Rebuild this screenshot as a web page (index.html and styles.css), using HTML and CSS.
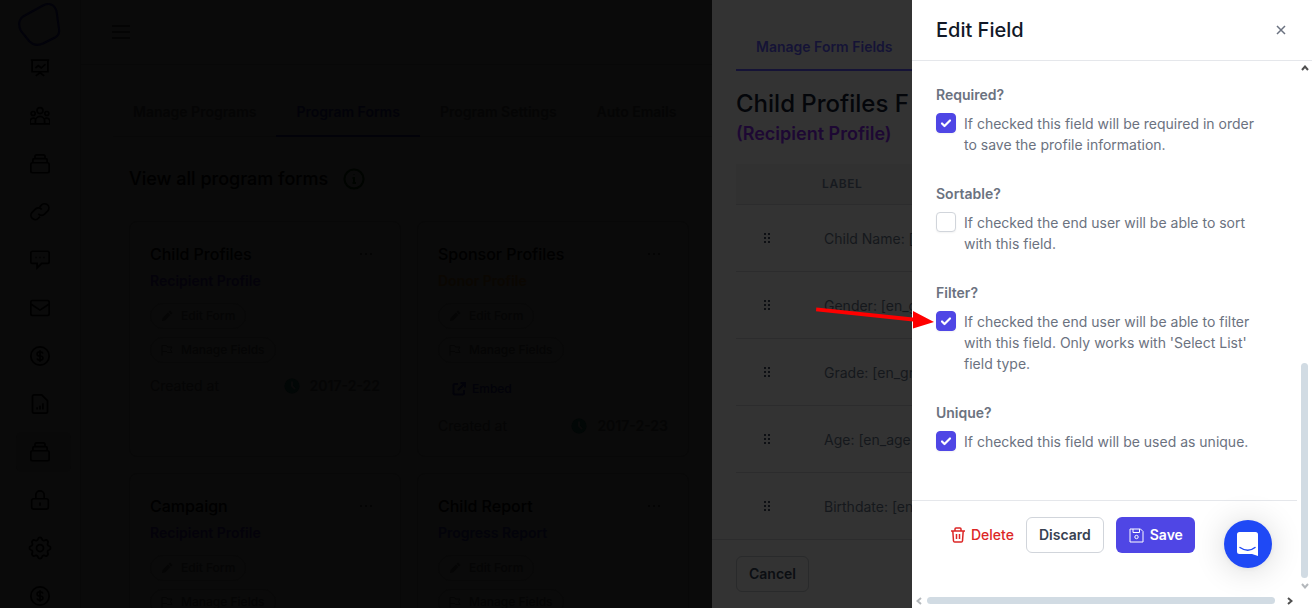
FILE: index.html
```html
<!DOCTYPE html>
<html lang="en">
<head>
<meta charset="utf-8">
<meta name="viewport" content="width=device-width, initial-scale=1">
<title>Edit Field</title>
<link rel="stylesheet" href="styles.css">
</head>
<body>
<svg class="sprite" aria-hidden="true">
  <symbol id="i-board" viewBox="0 0 24 24"><path d="M1 2.500h22M2.500 2.500v14h19v-14M6.500 12l3.500-3 3.500 3 5-4.500M7 21.500l5-4 5 4"/></symbol>
  <symbol id="i-users" viewBox="0 0 24 24"><circle cx="12" cy="5.500" r="3.600"/><circle cx="3.800" cy="9" r="2.400"/><circle cx="20.200" cy="9" r="2.400"/><path d="M6.500 21.500v-3.500a5.500 5.500 0 0 1 11 0v3.500zM6.500 21.500H0v-2.500a4 4 0 0 1 6.500-3.500M17.500 21.500H24v-2.500a4 4 0 0 0-6.500-3.500"/></symbol>
  <symbol id="i-stack" viewBox="0 0 24 24"><rect x="1" y="10.500" width="22" height="12" rx="2"/><path d="M3.500 10.500V7a1.500 1.500 0 0 1 1.500-1.500h14A1.500 1.500 0 0 1 20.500 7v3.500M6 5.500V3a2 2 0 0 1 2-2h8a2 2 0 0 1 2 2v2.500"/></symbol>
  <symbol id="i-link" viewBox="0 0 24 24"><path d="M10 14.500a5 5 0 0 0 7.500.5l4-4a5 5 0 0 0-8-6.500l-2 2M14 9.500a5 5 0 0 0-7.500-.5l-4 4a5 5 0 0 0 7.500 7l2-2" transform="translate(0 -0.500)"/></symbol>
  <symbol id="i-chat" viewBox="0 0 24 24"><path d="M3 1.500h18a2 2 0 0 1 2 2V14a2 2 0 0 1-2 2h-7l-5.500 5.500V16H3a2 2 0 0 1-2-2V3.500a2 2 0 0 1 2-2zM6.500 9h1.500M11.200 9h1.500M16 9h1.500"/></symbol>
  <symbol id="i-mail" viewBox="0 0 24 24"><rect x="1" y="3" width="22" height="18" rx="2"/><path d="M1.500 7.500L12 14.500l10.500-7"/></symbol>
  <symbol id="i-dollar" viewBox="0 0 24 24"><circle cx="12" cy="12" r="11"/><path d="M15.500 9c-.5-1.500-1.800-2-3.500-2-2 0-3.500.8-3.500 2.500S10 12 12 12s3.500.8 3.500 2.500S14 17 12 17s-3.200-.6-3.600-2M12 5v14"/></symbol>
  <symbol id="i-report" viewBox="0 0 24 24"><path d="M5 1h9l7 7v13a2 2 0 0 1-2 2H5a2 2 0 0 1-2-2V3a2 2 0 0 1 2-2zM8.500 18.500V16M12 18.500V14M15.500 18.500V11"/></symbol>
  <symbol id="i-lock" viewBox="0 0 24 24"><rect x="2" y="10.500" width="20" height="12.500" rx="2.500"/><path d="M7 10.500V6a5 5 0 0 1 10 0v4.500M12 15v4"/></symbol>
  <symbol id="i-gear" viewBox="0 0 24 24"><path d="M10.300 4.300c.4-1.750 2.900-1.750 3.400 0a1.700 1.700 0 0 0 2.600 1.100c1.500-.95 3.300.8 2.400 2.400a1.700 1.700 0 0 0 1 2.500c1.800.4 1.800 2.900 0 3.400a1.700 1.700 0 0 0-1 2.600c.9 1.500-.9 3.300-2.400 2.400a1.700 1.700 0 0 0-2.600 1c-.5 1.800-3 1.800-3.400 0a1.700 1.700 0 0 0-2.600-1c-1.500.9-3.300-.9-2.400-2.400a1.700 1.700 0 0 0-1-2.600c-1.800-.5-1.800-3 0-3.400a1.700 1.700 0 0 0 1-2.500c-.9-1.600.9-3.350 2.400-2.400 1 .6 2.300.1 2.600-1.100z"/><circle cx="12" cy="12" r="3"/></symbol>
  <symbol id="i-pencil" viewBox="0 0 12 12"><path d="M1 11l.8-3L7 2.800 9.200 5 4 10.200zM7.800 2L9 .8 11.200 3 10 4.200z"/></symbol>
  <symbol id="i-flag" viewBox="0 0 12 12"><path d="M1 11.500v-10h4.500L6.500 3H11L9.500 5.500 11 8.500H6.500L5.500 7.500H1"/></symbol>
  <symbol id="i-clock" viewBox="0 0 16 16"><circle cx="8" cy="8" r="7.500"/><path class="hand" d="M8 3.500V8l3 3"/></symbol>
  <symbol id="i-grip" viewBox="0 0 6 10"><path d="M0 0h2v2H0zM4 0h2v2H4zM0 4h2v2H0zM4 4h2v2H4zM0 8h2v2H0zM4 8h2v2H4z"/></symbol>
</svg>

<div class="app">
  <nav class="sidebar" aria-label="Main">
    <svg class="logo" viewBox="0 0 44 44"><path d="M5 14.500L25 3.500Q35-1 38.500 9L41 27Q42 33 37 35.500L25 41.500Q17 45 11.500 39.500L3 29Q-1.500 20 5 14.500z"/></svg>
    <a class="side-link" href="#dashboard" aria-label="Dashboard"><svg class="icon"><use href="#i-board"/></svg></a>
    <a class="side-link" href="#people" aria-label="People"><svg class="icon"><use href="#i-users"/></svg></a>
    <a class="side-link" href="#records" aria-label="Records"><svg class="icon"><use href="#i-stack"/></svg></a>
    <a class="side-link" href="#links" aria-label="Links"><svg class="icon"><use href="#i-link"/></svg></a>
    <a class="side-link" href="#messages" aria-label="Messages"><svg class="icon"><use href="#i-chat"/></svg></a>
    <a class="side-link" href="#mail" aria-label="Mail"><svg class="icon"><use href="#i-mail"/></svg></a>
    <a class="side-link" href="#payments" aria-label="Payments"><svg class="icon"><use href="#i-dollar"/></svg></a>
    <a class="side-link" href="#reports" aria-label="Reports"><svg class="icon"><use href="#i-report"/></svg></a>
    <a class="side-link is-active" href="#programs" aria-label="Programs"><svg class="icon"><use href="#i-stack"/></svg></a>
    <a class="side-link" href="#security" aria-label="Security"><svg class="icon"><use href="#i-lock"/></svg></a>
    <a class="side-link" href="#settings" aria-label="Settings"><svg class="icon icon-gear"><use href="#i-gear"/></svg></a>
    <a class="side-link" href="#billing" aria-label="Billing"><svg class="icon"><use href="#i-dollar"/></svg></a>
  </nav>

  <div class="page">
    <header class="topbar">
      <button class="menu-button" type="button" aria-label="Menu"><svg viewBox="0 0 18 14"><path d="M0 1h18M0 7h18M0 13h18"/></svg></button>
    </header>
    <main class="content">
      <nav class="tabs">
        <a class="tab" href="#manage-programs">Manage Programs</a>
        <a class="tab is-active" href="#program-forms">Program Forms</a>
        <a class="tab" href="#program-settings">Program Settings</a>
        <a class="tab" href="#auto-emails">Auto Emails</a>
      </nav>
      <div class="heading">
        <h1>View all program forms</h1>
        <svg class="info" viewBox="0 0 22 22"><circle cx="11" cy="11" r="9.500"/><path d="M11 6.500v.5M9.500 10H11v5M9.500 15h3.500"/></svg>
      </div>
      <div class="cards">
        <article class="card">
          <div class="card-head"><h2>Child Profiles</h2><button class="more" type="button" aria-label="More"><i></i><i></i><i></i></button></div>
          <p class="kind">Recipient Profile</p>
          <div class="card-actions">
            <button class="pill" type="button"><svg class="fill"><use href="#i-pencil"/></svg>Edit Form</button>
            <button class="pill" type="button"><svg><use href="#i-flag"/></svg>Manage Fields</button>
          </div>
          <div class="created"><span>Created at</span><svg><use href="#i-clock"/></svg><time>2017-2-22</time></div>
        </article>
        <article class="card">
          <div class="card-head"><h2>Sponsor Profiles</h2><button class="more" type="button" aria-label="More"><i></i><i></i><i></i></button></div>
          <p class="kind kind-donor">Donor Profile</p>
          <div class="card-actions">
            <button class="pill" type="button"><svg class="fill"><use href="#i-pencil"/></svg>Edit Form</button>
            <button class="pill" type="button"><svg><use href="#i-flag"/></svg>Manage Fields</button>
          </div>
          <a class="embed" href="#embed"><svg viewBox="0 0 14 14"><path d="M6 2H3a1.500 1.500 0 0 0-1.500 1.500V11A1.500 1.500 0 0 0 3 12.500h7.500A1.500 1.500 0 0 0 12 11V8M8.500 1H13v4.500M13 1L6 8"/></svg>Embed</a>
          <div class="created"><span>Created at</span><svg><use href="#i-clock"/></svg><time>2017-2-23</time></div>
        </article>
        <article class="card">
          <div class="card-head"><h2>Campaign</h2><button class="more" type="button" aria-label="More"><i></i><i></i><i></i></button></div>
          <p class="kind">Recipient Profile</p>
          <div class="card-actions">
            <button class="pill" type="button"><svg class="fill"><use href="#i-pencil"/></svg>Edit Form</button>
            <button class="pill" type="button"><svg><use href="#i-flag"/></svg>Manage Fields</button>
          </div>
        </article>
        <article class="card">
          <div class="card-head"><h2>Child Report</h2><button class="more" type="button" aria-label="More"><i></i><i></i><i></i></button></div>
          <p class="kind kind-report">Progress Report</p>
          <div class="card-actions">
            <button class="pill" type="button"><svg class="fill"><use href="#i-pencil"/></svg>Edit Form</button>
            <button class="pill" type="button"><svg><use href="#i-flag"/></svg>Manage Fields</button>
          </div>
        </article>
      </div>
    </main>
  </div>
</div>

<section class="fields-drawer" aria-label="Manage Form Fields">
  <div class="fields-body">
    <nav class="fields-tabs"><a href="#fields">Manage Form Fields</a></nav>
    <h2 class="fields-title">Child Profiles F</h2>
    <p class="fields-kind">(Recipient Profile)</p>
    <table class="fields-table">
      <thead><tr><th class="grip-cell" aria-label="Order"></th><th>LABEL</th></tr></thead>
      <tbody>
        <tr><td class="grip-cell"><svg class="grip"><use href="#i-grip"/></svg></td><td>Child Name: [</td></tr>
        <tr><td class="grip-cell"><svg class="grip"><use href="#i-grip"/></svg></td><td>Gender: [en_g</td></tr>
        <tr><td class="grip-cell"><svg class="grip"><use href="#i-grip"/></svg></td><td>Grade: [en_gr</td></tr>
        <tr><td class="grip-cell"><svg class="grip"><use href="#i-grip"/></svg></td><td>Age: [en_age</td></tr>
        <tr><td class="grip-cell"><svg class="grip"><use href="#i-grip"/></svg></td><td>Birthdate: [en</td></tr>
      </tbody>
    </table>
  </div>
  <footer class="fields-footer"><button class="cancel" type="button">Cancel</button></footer>
</section>

<section class="edit-drawer" role="dialog" aria-labelledby="edit-title">
  <header class="edit-header">
    <h2 id="edit-title">Edit Field</h2>
    <button class="close" type="button" aria-label="Close"><svg viewBox="0 0 10 10"><path d="M1 1l8 8M9 1L1 9"/></svg></button>
  </header>
  <div class="edit-main">
    <form class="edit-form">
      <div class="options">
        <div class="option">
          <h3>Required?</h3>
          <label><input type="checkbox" checked><span>If checked this field will be required in order to save the profile information.</span></label>
        </div>
        <div class="option">
          <h3>Sortable?</h3>
          <label><input type="checkbox"><span>If checked the end user will be able to sort with this field.</span></label>
        </div>
        <div class="option">
          <h3>Filter?</h3>
          <label><input type="checkbox" checked><span>If checked the end user will be able to filter with this field. Only works with 'Select List' field type.</span></label>
        </div>
        <div class="option">
          <h3>Unique?</h3>
          <label><input type="checkbox" checked><span>If checked this field will be used as unique.</span></label>
        </div>
      </div>
      <footer class="actions">
        <button class="btn btn-delete" type="button"><svg viewBox="0 0 14 16"><path d="M0 4h14M4 4V2a1 1 0 0 1 1-1h4a1 1 0 0 1 1 1v2M1.800 4l.7 10a1.200 1.200 0 0 0 1.200 1h6.600a1.200 1.200 0 0 0 1.200-1l.7-10M5.500 7v5M8.500 7v5"/></svg>Delete</button>
        <button class="btn btn-discard" type="button">Discard</button>
        <button class="btn btn-save" type="button"><svg viewBox="0 0 15 15"><path d="M1 1h10.500L14 3.500V14H1zM4 1v3.500h6.500V1"/><circle cx="7.500" cy="9" r="1.700"/></svg>Save</button>
      </footer>
    </form>
    <div class="scroll scroll-y" aria-hidden="true">
      <svg viewBox="0 0 8 6"><path d="M1 5l3-3.500L7 5"/></svg><span class="thumb"></span><svg class="dim" viewBox="0 0 8 6"><path d="M1 1l3 3.500L7 1"/></svg>
    </div>
  </div>
  <div class="scroll scroll-x" aria-hidden="true">
    <svg class="dim" viewBox="0 0 6 8"><path d="M5 1L1.500 4 5 7"/></svg><span class="thumb"></span><svg viewBox="0 0 6 8"><path d="M1 1l3.500 3L1 7"/></svg>
  </div>
</section>

<svg class="pointer" viewBox="0 0 118 22" aria-hidden="true"><path d="M0.300 0.500L97 10.500V4L118 15 97 21.500V14.600L0 4.300z"/></svg>

<button class="messenger" type="button" aria-label="Open chat"><svg viewBox="0 0 24 26"><path d="M3.500 1h16A2.500 2.500 0 0 1 22 3.500V25l-6-2H3.500A2.500 2.500 0 0 1 1 20.500v-17A2.500 2.500 0 0 1 3.500 1z" fill="#fff"/><path d="M4 16.500q8 5.500 15 0" fill="none" stroke="#1f49f5" stroke-width="1.500" stroke-linecap="round"/></svg></button>
</body>
</html>
```
FILE: styles.css
```css
* { box-sizing: border-box; }
body {
  margin: 0;
  height: 100vh;
  overflow: hidden;
  background: #0a0a0a;
  color: #000;
  font-family: Inter, "Liberation Sans", sans-serif;
  font-size: 14px;
  line-height: 20px;
}
h1, h2, h3, p { margin: 0; font-weight: 500; }
a { color: inherit; text-decoration: none; }
button { font: inherit; color: inherit; background: none; border: 0; padding: 0; }
svg { display: block; flex: none; fill: none; stroke: currentColor; }
.sprite { display: none; }

/* Page behind the drawers */
.app { display: flex; height: 100vh; overflow: hidden; }
.sidebar {
  flex: none;
  width: 81px;
  padding: 2px 9px 0 16px;
  border-right: 1px solid #080808;
  display: flex;
  flex-direction: column;
}
.logo { flex: none; width: 44px; height: 44px; margin: 0 2px 2px; color: #02020a; stroke-width: 2; }
.side-link {
  flex: none;
  height: 40px;
  margin-bottom: 8px;
  padding-left: 14px;
  display: flex;
  align-items: center;
  border-radius: 6px;
}
.side-link.is-active { background: #090909; }
.icon { width: 20px; height: 20px; stroke-width: 2; overflow: visible; }
.icon-gear { width: 28px; height: 28px; margin-left: -4px; stroke-width: 1.500; }
.page { flex: 1; min-width: 0; }
.topbar {
  height: 65px;
  padding: 0 31px;
  border-bottom: 1px solid #080808;
  display: flex;
  align-items: center;
}
.menu-button svg { width: 18px; height: 14px; color: #040404; stroke-width: 2; }
.content { padding: 24px 32px; }
.tabs { display: flex; height: 48px; border-bottom: 1px solid #080808; color: #050505; }
.tab { padding: 13px 20px; font-weight: 600; height: 48px; white-space: nowrap; }
.tab.is-active { color: #020209; border-bottom: 2px solid #020209; }
.heading { display: flex; align-items: center; gap: 15px; padding: 28px 16px; }
.heading h1 { font-size: 18px; line-height: 28px; }
.info { width: 22px; height: 22px; color: #000400; stroke-width: 2; }
.cards {
  display: grid;
  grid-template-columns: repeat(auto-fill, 272px);
  grid-auto-rows: 236px;
  gap: 16px;
  padding: 0 16px;
  max-width: 608px;
}
.card { padding: 20px; border: 1px solid #080808; border-radius: 8px; display: flex; flex-direction: column; }
.card-head { display: flex; justify-content: space-between; align-items: center; }
.card h2 { font-size: 16px; line-height: 24px; }
.more { display: flex; gap: 3px; padding-right: 8px; }
.more i { width: 2px; height: 2px; background: #040404; }
.kind { color: #04020a; font-weight: 600; padding: 5px 0 12px; }
.kind-donor { color: #0b0702; }
.kind-report { color: #03030a; }
.card-actions { display: flex; flex-direction: column; align-items: flex-start; gap: 8px; }
.pill {
  height: 26px;
  padding: 0 10px;
  border: 1px solid #080808;
  border-radius: 13px;
  color: #050505;
  font-size: 12px;
  font-weight: 500;
  display: flex;
  align-items: center;
  gap: 8px;
}
.pill svg { width: 12px; height: 12px; }
.pill .fill { fill: currentColor; stroke: none; }
.embed { display: flex; align-items: center; gap: 6px; padding: 16px 14px 0; color: #020209; font-size: 12px; font-weight: 500; }
.embed svg { width: 14px; height: 14px; stroke-width: 2; }
.created { display: flex; align-items: center; gap: 10px; padding-top: 13px; color: #050505; }
.embed + .created { padding-top: 17px; }
.created span { flex: 1; }
.created svg { width: 16px; height: 16px; fill: #020706; stroke: none; }
.hand { stroke: #0a0a0a; stroke-width: 2; fill: none; }
.created time { font-weight: 600; }

/* Form fields drawer */
.fields-drawer {
  position: fixed;
  inset: 0 400px 0 auto;
  width: 200px;
  overflow: hidden;
  background: #333;
  white-space: nowrap;
  display: flex;
  flex-direction: column;
}
.fields-body { flex: 1; min-height: 0; overflow: hidden; padding: 24px 0 0 24px; }
.fields-tabs { display: flex; }
.fields-tabs a {
  flex: 1;
  padding: 13px 0 12px 20px;
  border-bottom: 2px solid #151336;
  color: #151336;
  font-weight: 600;
}
.fields-title { padding-top: 17px; color: #04060a; font-size: 24px; line-height: 32px; }
.fields-kind { color: #1d0833; font-size: 18px; line-height: 28px; font-weight: 600; }
.fields-table { width: 100%; margin-top: 16px; border-collapse: collapse; table-layout: fixed; }
.fields-table th {
  height: 40px;
  padding: 0 0 0 14px;
  background: #313131;
  color: #171a1f;
  font-size: 12px;
  font-weight: 600;
  letter-spacing: .05em;
  text-align: left;
}
.fields-table td { height: 67px; padding: 2px 0 0 16px; color: #15181c; overflow: hidden; }
.fields-table tr { border-bottom: 1px solid #2c2c2d; }
.fields-table .grip-cell { width: 72px; padding: 0 28px; }
.grip { width: 6px; height: 10px; fill: #0d0f13; stroke: none; }
.fields-footer { flex: none; padding: 16px 24px; border-top: 1px solid #2c2c2d; background: #333; }
.cancel { height: 36px; padding: 0 12px; border: 1px solid #292a2b; border-radius: 6px; color: #0b0e12; font-weight: 600; }

/* Edit field drawer */
.edit-drawer {
  position: fixed;
  inset: 0 0 0 auto;
  width: 400px;
  background: #fff;
  display: flex;
  flex-direction: column;
}
.edit-header {
  flex: none;
  height: 61px;
  padding: 0 24px;
  border-bottom: 1px solid #e5e7eb;
  color: #111827;
  display: flex;
  align-items: center;
  justify-content: space-between;
}
.edit-header h2 { font-size: 20px; line-height: 28px; }
.close { padding: 2px; color: #6b7280; }
.close svg { width: 10px; height: 10px; stroke-width: 1.500; }
.edit-main { flex: 1; min-height: 0; display: flex; }
.edit-form { flex: 1; min-width: 0; display: flex; flex-direction: column; }
.options { display: flex; flex-direction: column; gap: 28px; padding: 23px 24px 48px; color: #6b7280; line-height: 21px; }
.option h3 { font-size: 14px; line-height: 21px; font-weight: 600; margin-bottom: 8px; }
.option label { display: flex; gap: 8px; align-items: flex-start; max-width: 328px; }
.option input {
  appearance: none;
  flex: none;
  width: 20px;
  height: 20px;
  margin: 0;
  border: 1px solid #d1d5db;
  border-radius: 4px;
  background: #fff;
  box-shadow: 0 1px 2px rgba(0, 0, 0, .05);
}
.option input:checked {
  border-color: #4f46e5;
  background: #4f46e5 url("data:image/svg+xml,%3Csvg viewBox='0 0 20 20' xmlns='http://www.w3.org/2000/svg'%3E%3Cpath d='M6 10.500l2.500 2.500 5.500-5.500' fill='none' stroke='white' stroke-width='2.200' stroke-linecap='round' stroke-linejoin='round'/%3E%3C/svg%3E") center / 20px 20px no-repeat;
}
.actions { display: flex; padding: 16px 39px; gap: 12px; border-top: 1px solid #e5e7eb; }
.btn { height: 36px; border-radius: 6px; font-weight: 600; display: flex; align-items: center; gap: 6px; }
.btn-delete { color: #dc2626; font-weight: 500; }
.btn-delete svg { width: 14px; height: 16px; stroke-width: 1.500; }
.btn-discard { padding: 0 12px; border: 1px solid #d1d5db; color: #374151; }
.btn-save { padding: 0 12px 0 13px; background: #4f46e5; color: #fff; }
.btn-save svg { width: 15px; height: 15px; }

.scroll { flex: none; display: flex; align-items: center; color: #505050; }
.scroll svg { stroke-width: 2; }
.scroll .dim { color: #b4b8bc; }
.thumb { background: #d1dbe3; border-radius: 4px; }
.scroll-y { width: 15px; flex-direction: column; padding: 4px 0; }
.scroll-y svg { width: 8px; height: 6px; }
.scroll-y .thumb { width: 7px; height: 41%; margin: auto 0 5px; }
.scroll-x { height: 15px; padding: 0 19px 0 4px; gap: 5px; }
.scroll-x svg { width: 6px; height: 8px; }
.scroll-x .thumb { flex: 1; height: 7px; margin-right: 7px; }

/* Annotation and chat launcher */
.pointer { position: fixed; right: 378px; top: 307px; width: 118px; height: 22px; fill: #f00; stroke: none; }
.messenger {
  position: fixed;
  right: 40px;
  bottom: 40px;
  width: 48px;
  height: 48px;
  border-radius: 50%;
  background: #1f49f5;
  box-shadow: 0 2px 32px rgba(0, 0, 0, .16), 0 1px 6px rgba(0, 0, 0, .06);
  display: grid;
  place-items: center;
}
.messenger svg { width: 24px; height: 26px; stroke: none; }
```
